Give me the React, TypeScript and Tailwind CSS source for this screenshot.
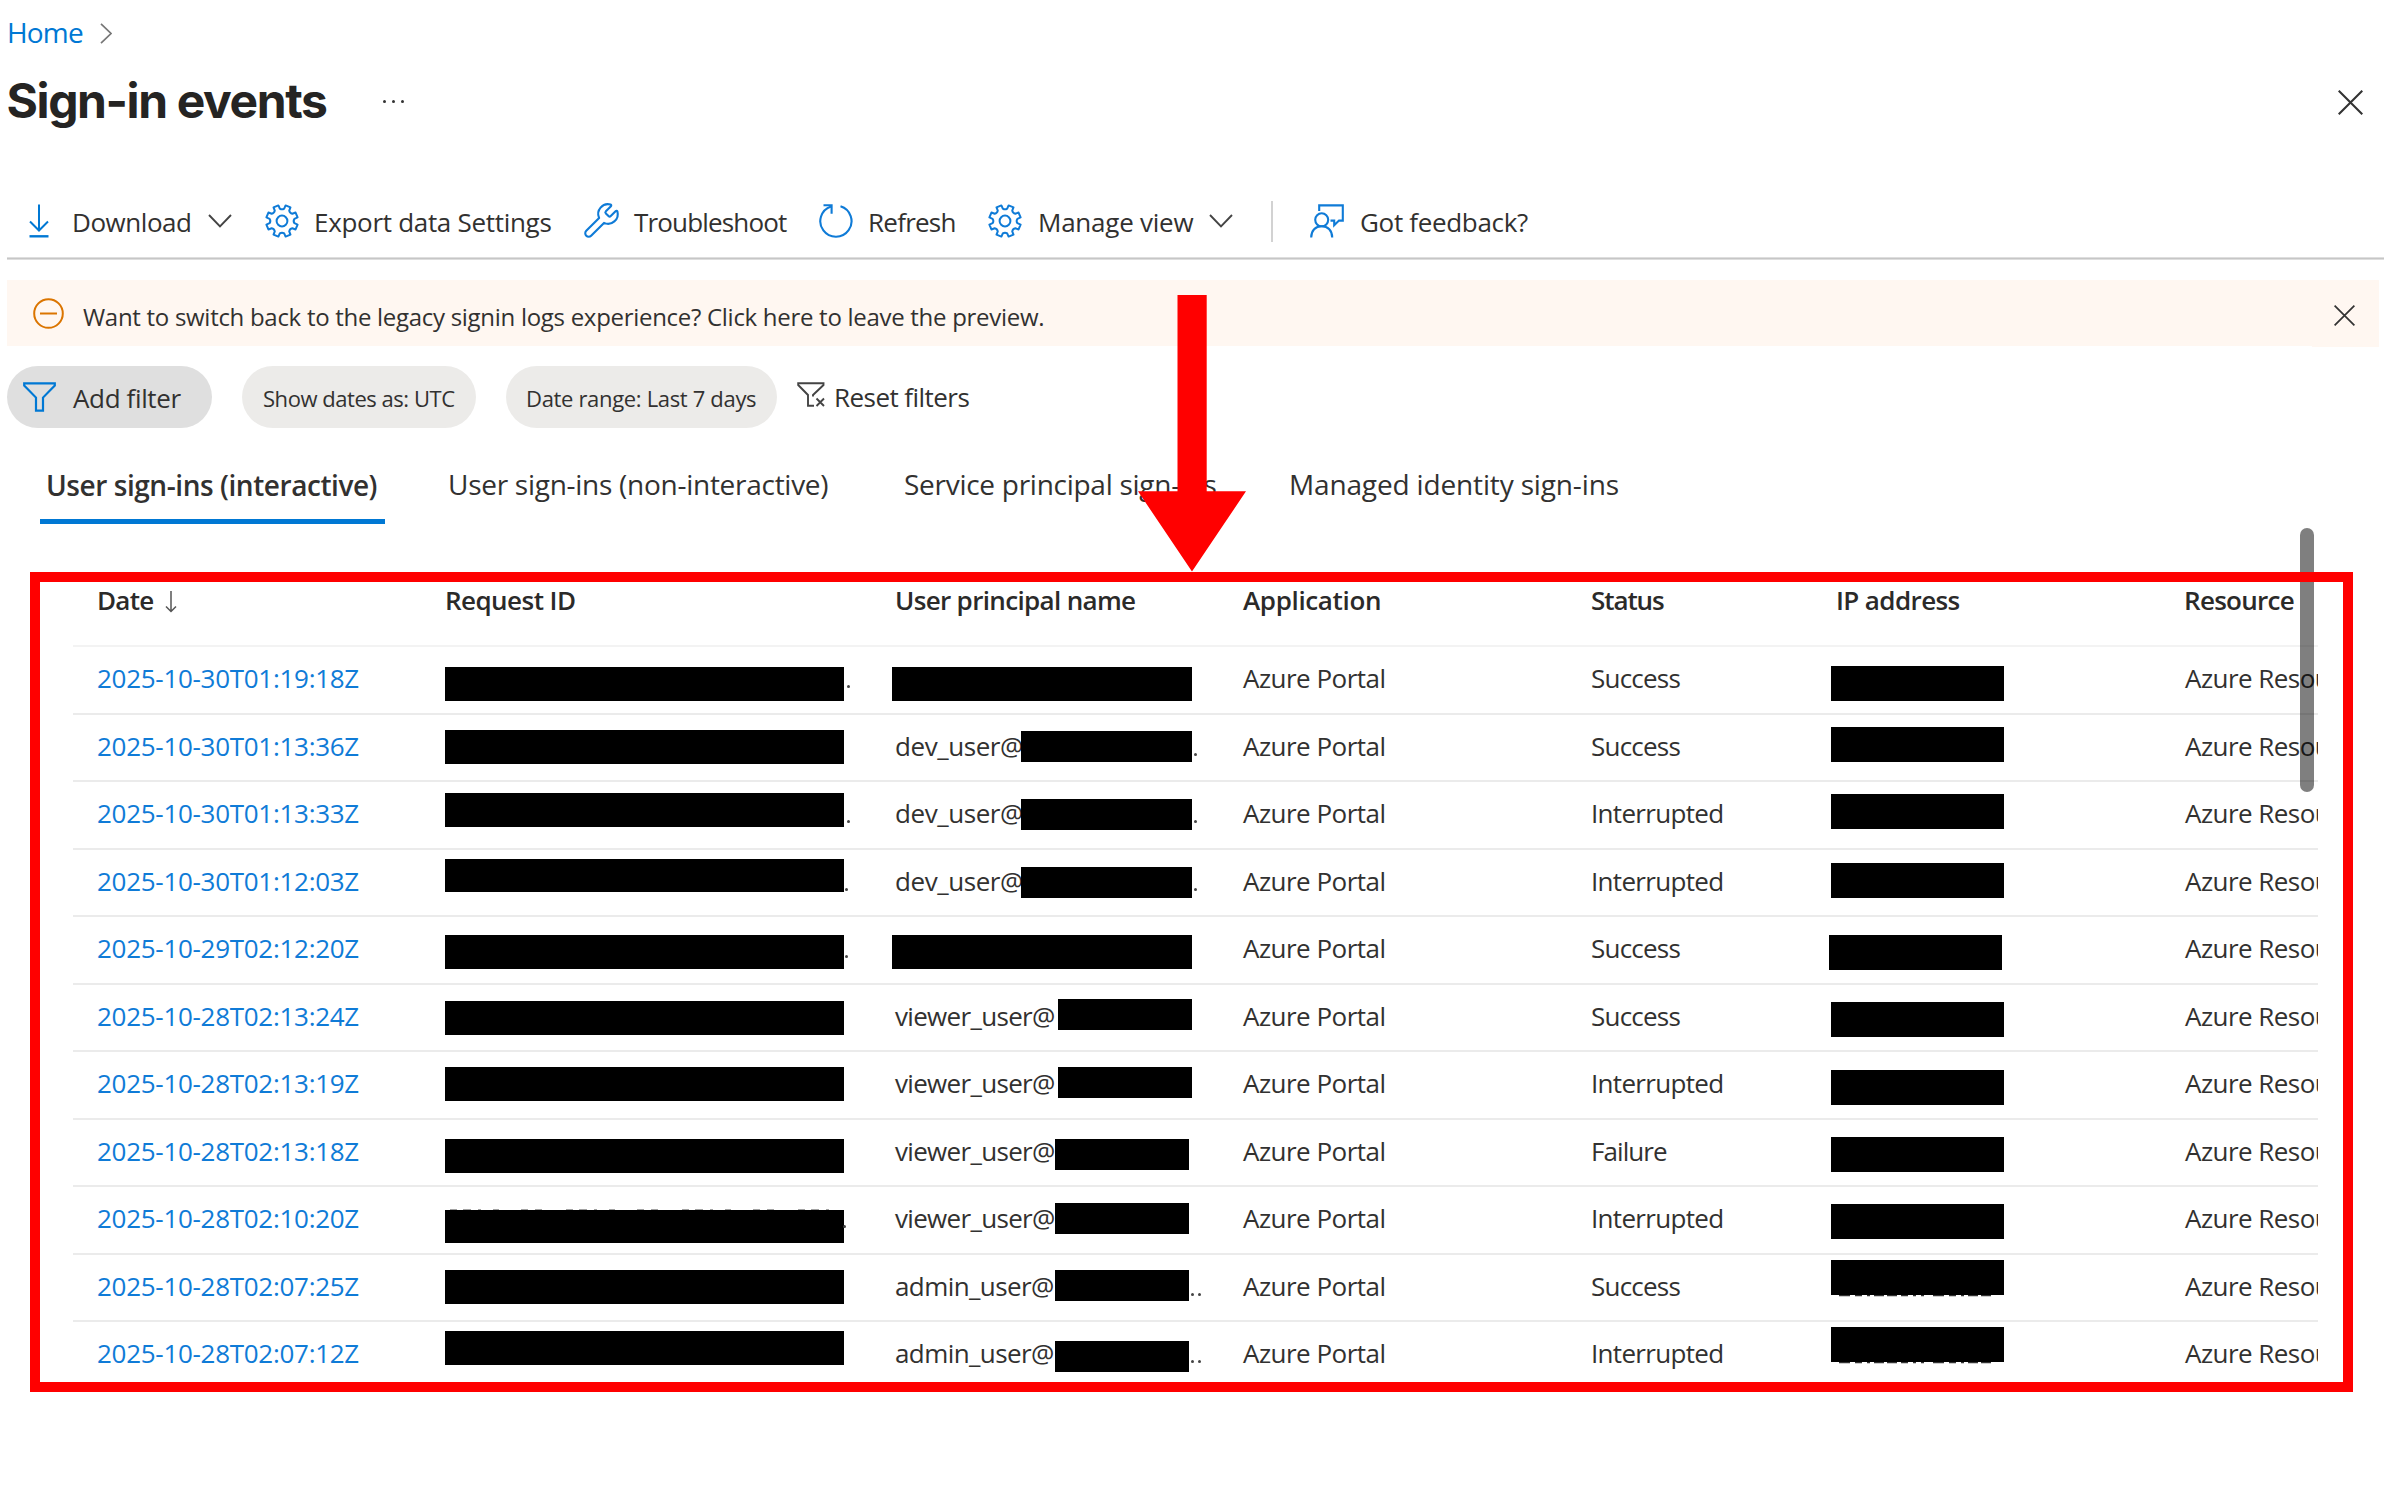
import type { ReactNode } from "react";
import { Wrench } from "lucide-react";

type Span = [left: number, right: number, top: number, bottom: number];

interface Row {
  date: string;
  user?: [text: string, tracking: string];
  status: string;
  request: [top: number, bottom: number];
  name: Span;
  ip: Span;
  requestDot?: number;
  nameDots?: number[];
}

const DEV: [string, string] = ["dev_user@", "tracking-[-0.43px]"];
const VIEWER: [string, string] = ["viewer_user@", "tracking-[-0.68px]"];
const ADMIN: [string, string] = ["admin_user@", "tracking-[-0.59px]"];

const STATUS_TRACKING: Record<string, string> = {
  Success: "tracking-[-0.78px]",
  Interrupted: "tracking-[-0.68px]",
  Failure: "tracking-[-0.93px]",
};

const ROWS: Row[] = [
  { date: "2025-10-30T01:19:18Z", status: "Success", request: [667, 701], name: [891.5, 1192, 667, 701], ip: [1831, 2004, 666, 701], requestDot: 847 },
  { date: "2025-10-30T01:13:36Z", user: DEV, status: "Success", request: [730, 764], name: [1021, 1192, 731.5, 762.5], ip: [1831, 2004, 727.5, 762.5], nameDots: [1194] },
  { date: "2025-10-30T01:13:33Z", user: DEV, status: "Interrupted", request: [793, 827], name: [1021, 1192, 799, 830], ip: [1831, 2004, 794, 829], requestDot: 847, nameDots: [1194] },
  { date: "2025-10-30T01:12:03Z", user: DEV, status: "Interrupted", request: [859, 892.5], name: [1021, 1192, 867, 898], ip: [1831, 2004, 863, 898], requestDot: 845, nameDots: [1194] },
  { date: "2025-10-29T02:12:20Z", status: "Success", request: [935, 969], name: [891.5, 1192, 935, 969], ip: [1829, 2002, 935, 970], requestDot: 845 },
  { date: "2025-10-28T02:13:24Z", user: VIEWER, status: "Success", request: [1001, 1035], name: [1058, 1192, 999, 1030], ip: [1831, 2004, 1002.5, 1037.5] },
  { date: "2025-10-28T02:13:19Z", user: VIEWER, status: "Interrupted", request: [1067.5, 1101], name: [1058, 1192, 1067.5, 1098.5], ip: [1831, 2004, 1070, 1105] },
  { date: "2025-10-28T02:13:18Z", user: VIEWER, status: "Failure", request: [1139, 1173], name: [1055, 1189, 1139, 1170], ip: [1831, 2004, 1137, 1172] },
  { date: "2025-10-28T02:10:20Z", user: VIEWER, status: "Interrupted", request: [1210, 1243], name: [1055, 1189, 1203.5, 1234.5], ip: [1831, 2004, 1204.5, 1239.5], requestDot: 843 },
  { date: "2025-10-28T02:07:25Z", user: ADMIN, status: "Success", request: [1270.5, 1304], name: [1055, 1189, 1270.5, 1301.5], ip: [1831, 2004, 1260.5, 1295], nameDots: [1191, 1198] },
  { date: "2025-10-28T02:07:12Z", user: ADMIN, status: "Interrupted", request: [1331, 1365], name: [1055, 1189, 1341, 1372], ip: [1831, 2004, 1327.5, 1362], nameDots: [1191, 1198] },
];

const TABLE_LEFT = 73;
const FIRST_ROW = 647;
const ROW_HEIGHT = 67.56;
const GRID = "grid grid-cols-[348px_450px_348px_348px_246px_348px_200px] pl-6";

const GEAR = (() => {
  const pt = (r: number, deg: number) => {
    const a = (deg * Math.PI) / 180;
    return `${(17 + r * Math.cos(a)).toFixed(2)} ${(17 + r * Math.sin(a)).toFixed(2)}`;
  };
  let d = "";
  for (let i = 0; i < 8; i++) {
    const c = 22.5 + i * 45;
    d += `${i ? "L" : "M"}${pt(12.6, c - 12.5)} L${pt(16, c - 9.5)} L${pt(16, c + 9.5)} L${pt(12.6, c + 12.5)} Q${pt(10.9, c + 22.5)} ${pt(12.6, c + 32.5)} `;
  }
  return d + "Z";
})();

function Gear() {
  return (
    <svg className="size-[34px] shrink-0" viewBox="0 0 34 34" fill="none" stroke="#0f7bd7" strokeWidth="2" strokeLinejoin="round">
      <path d={GEAR} />
      <circle cx="17" cy="17" r="5.4" />
    </svg>
  );
}

function Chevron() {
  return (
    <svg className="h-3.5 w-6 shrink-0" viewBox="0 0 24 14" fill="none" stroke="#444" strokeWidth="1.9">
      <path d="M1 1 12 12.3 23 1" />
    </svg>
  );
}

function Cross({ className }: { className: string }) {
  return (
    <svg className={className} viewBox="0 0 24 24" fill="none" stroke="#333" strokeWidth="2">
      <path d="M.7.7 23.3 23.3M23.3.7.7 23.3" />
    </svg>
  );
}

function Label({ className, children }: { className: string; children: ReactNode }) {
  return <span className={`whitespace-nowrap ${className}`}>{children}</span>;
}

function Toolbar() {
  return (
    <div className="mt-[46px] flex h-[72px] items-center text-[26px]">
      <svg className="ml-[28.5px] h-[34px] w-5" viewBox="0 0 20 34" fill="none" stroke="#0078d4" strokeWidth="2">
        <path d="M10 .5V26.5M1 17.5 10 26.5 19 17.5" />
        <path d="M.5 32.3H19.5" strokeWidth="2.4" />
      </svg>
      <Label className="ml-[23.5px] w-[136px] pt-0.5 tracking-[-0.45px]">Download</Label>
      <Chevron />
      <div className="ml-[33px] flex">
        <Gear />
      </div>
      <Label className="ml-[15px] w-[268px] pt-0.5 tracking-[-0.3px]">Export data Settings</Label>
      <Wrench className="-mt-px size-[39px] shrink-0 text-[#0f7bd7]" strokeWidth={1.3} />
      <Label className="ml-[13px] w-[185px] pt-0.5 tracking-[-0.84px]">Troubleshoot</Label>
      <svg className="h-[34px] w-[34px] shrink-0" viewBox="0 0 34 34" fill="none" stroke="#0f7bd7" strokeWidth="2.1">
        <path d="M21.5 2.3A15.6 15.6 0 1 1 12 2.4" />
        <path d="M4.5 1.2H12.6V9.8" />
      </svg>
      <Label className="ml-[15px] w-[120px] pt-0.5 tracking-[-0.75px]">Refresh</Label>
      <Gear />
      <Label className="ml-[16px] w-[171px] pt-0.5 tracking-[-0.24px]">Manage view</Label>
      <Chevron />
      <div className="ml-[38px] h-[41px] w-0.5 bg-[#d2d2d2]" />
      <svg className="ml-[37px] h-[34px] w-[34px] shrink-0" viewBox="0 0 34 34" fill="none" stroke="#0f7bd7" strokeWidth="2.1">
        <circle cx="11.7" cy="15.8" r="6.5" />
        <path d="M1.2 33.5C1.2 26.5 5.5 22.3 11.7 22.3S22.2 26.5 22.2 33.5" />
        <path d="M9.2 7V1.4H32.8V16.6H29L24.2 21.2V16.6H20.5" />
      </svg>
      <Label className="ml-[16px] pt-0.5 tracking-[-0.32px]">Got feedback?</Label>
    </div>
  );
}

function Banner() {
  return (
    <div className="relative ml-[7px] mt-5 flex h-[66px] w-[2372px] items-center bg-[#fff7f1]">
      <svg className="ml-[26px] size-[31px]" viewBox="0 0 31 31" fill="none" stroke="#db7500" strokeWidth="2">
        <circle cx="15.5" cy="15.5" r="14.3" />
        <path d="M7 15.5H24" />
      </svg>
      <Label className="ml-[19px] pt-2 text-2xl tracking-[-0.29px]">
        Want to switch back to the legacy signin logs experience? Click here to leave the preview.
      </Label>
      <Cross className="ml-auto mr-6 mt-1 size-[21px]" />
      <div className="absolute right-0 top-full h-px w-[67px] bg-[#fff7f1]" />
    </div>
  );
}

function Filters() {
  return (
    <div className="ml-[7px] mt-5 flex h-[62px] items-center text-[26px]">
      <div className="flex h-[62px] w-[205px] items-center rounded-[31px] bg-[#dfdfdf]">
        <svg className="ml-4 h-[30px] w-[33px]" viewBox="0 0 33 30" fill="none" stroke="#0078d4" strokeWidth="2.2">
          <path d="M1.2 1.3H31.8V3.6L20 15.6V28.7H13V15.6L1.2 3.6Z" />
        </svg>
        <Label className="ml-[17px] pt-0.5 tracking-[-0.36px]">Add filter</Label>
      </div>
      <div className="ml-[30px] flex h-[62px] w-[234px] items-center rounded-[31px] bg-[#ecebe9] pl-[21px] text-[22px]">
        <Label className="pt-0.5 tracking-[-0.46px]">Show dates as: UTC</Label>
      </div>
      <div className="ml-[30px] flex h-[62px] w-[271px] items-center rounded-[31px] bg-[#ecebe9] pl-5 text-[22px]">
        <Label className="pt-0.5 tracking-[-0.33px]">Date range: Last 7 days</Label>
      </div>
      <svg className="-mt-1.5 ml-5 h-[25px] w-7" viewBox="0 0 28 25" fill="none" stroke="#444" strokeWidth="1.9">
        <path d="M16 14.5V13L26.5 3V1.2H1.2V3L11 13V23.8H17" />
        <path d="M19.5 16.5 27 24M27 16.5 19.5 24" />
      </svg>
      <Label className="ml-[9px] tracking-[-0.55px]">Reset filters</Label>
    </div>
  );
}

function Tabs() {
  return (
    <div className="ml-10 mt-5 flex h-[76px] text-[28px] leading-[73px]">
      <div className="w-[345px] border-b-[5px] border-[#0078d4] pl-[6px] pt-px">
        <Label className="block h-[70px] font-semibold tracking-[-0.44px]">User sign-ins (interactive)</Label>
      </div>
      <Label className="ml-[63px] w-[456px] tracking-[-0.27px]">User sign-ins (non-interactive)</Label>
      <Label className="w-[385px] tracking-[-0.27px]">Service principal sign-ins</Label>
      <Label className="tracking-[-0.15px]">Managed identity sign-ins</Label>
    </div>
  );
}

function Redaction({ span: [left, right, top, bottom], rowTop }: { span: Span; rowTop: number }) {
  return (
    <div
      className="absolute bg-black"
      style={{ left: left - TABLE_LEFT, top: top - rowTop, width: right - left, height: bottom - top }}
    />
  );
}

function Dot({ x }: { x: number }) {
  return <div className="absolute top-[38px] size-[3px] rounded-full bg-[#444]" style={{ left: x - TABLE_LEFT }} />;
}

function EventRow({ row, index }: { row: Row; index: number }) {
  const rowTop = FIRST_ROW + index * ROW_HEIGHT;
  const last = index === ROWS.length - 1;
  return (
    <div className={`relative h-[67.56px] leading-[63px] ${GRID} ${last ? "" : "border-b-2 border-[#ebebeb]"}`}>
      <Label className="tracking-[-0.29px] text-[#0f7bd7]">{row.date}</Label>
      <span />
      <Label className={row.user ? row.user[1] : ""}>{row.user?.[0]}</Label>
      <Label className="tracking-[-0.52px]">Azure Portal</Label>
      <Label className={STATUS_TRACKING[row.status]}>{row.status}</Label>
      <span />
      <Label className="tracking-[-0.55px]">Azure Resource Manager</Label>
      {index === 8 && (
        <svg className="absolute left-[374px] top-[21.5px] h-[2px] w-[390px]" viewBox="0 0 390 2">
          <path d="M3 1.2H384" stroke="#444" strokeWidth="1.6" strokeDasharray="7 6 8 7 3 12 6 22 7 7 7 24" />
        </svg>
      )}
      <Redaction span={[445, 843.5, row.request[0], row.request[1]]} rowTop={rowTop} />
      <Redaction span={row.name} rowTop={rowTop} />
      <Redaction span={row.ip} rowTop={rowTop} />
      {row.requestDot && <Dot x={row.requestDot} />}
      {row.nameDots?.map((x) => <Dot key={x} x={x} />)}
      {index >= 9 && (
        <svg
          className="absolute left-[1764px] h-[2px] w-[160px]"
          style={{ top: row.ip[3] - rowTop }}
          viewBox="0 0 160 2"
        >
          <path d="M2 .6H157" stroke="#333" strokeWidth="1.2" strokeDasharray="11 5 7 5 3 4 10 3 10 4 7 5 3 5 3 9" />
        </svg>
      )}
    </div>
  );
}

function EventsTable() {
  return (
    <div className="ml-[73px] mt-12 w-[2245px] overflow-hidden text-[26px]">
      <div className={`h-[75px] border-b-2 border-[#f3f3f3] font-semibold leading-[56px] text-[#2b2a29] ${GRID}`}>
        <div className="flex items-center self-start">
          <Label className="w-[68px] tracking-[-0.75px]">Date</Label>
          <svg className="mt-1 h-[22px] w-3" viewBox="0 0 12 22" fill="none" stroke="#555" strokeWidth="1.5">
            <path d="M6 0V20.5M1 15.5 6 20.5 11 15.5" />
          </svg>
        </div>
        <Label className="tracking-[-0.55px]">Request ID</Label>
        <Label className="tracking-[-0.66px]">User principal name</Label>
        <Label className="tracking-[-0.35px]">Application</Label>
        <Label className="tracking-[-1.09px]">Status</Label>
        <Label className="-ml-px tracking-[-0.6px]">IP address</Label>
        <Label className="-ml-px tracking-[-0.72px]">Resource</Label>
      </div>
      {ROWS.map((row, i) => (
        <EventRow key={row.date} row={row} index={i} />
      ))}
    </div>
  );
}

export default function App() {
  return (
    <div className="relative h-[1490px] w-[2384px] overflow-hidden bg-white font-['Open_Sans',sans-serif] text-[#323130]">
      <div className="flex h-[62px] items-center">
        <Label className="ml-[7px] pt-px text-[28px] tracking-[-0.84px] text-[#0078d4]">Home</Label>
        <svg className="ml-[17px] mt-1 h-[21px] w-3" viewBox="0 0 12 21" fill="none" stroke="#777" strokeWidth="1.7">
          <path d="M1 .8 11 10.5 1 20.2" />
        </svg>
      </div>
      <div className="flex h-[77px] items-center">
        <h1 className="ml-[6.5px] whitespace-nowrap font-['Inter',sans-serif] text-[48px] font-bold leading-[77px] tracking-[-1.4px] text-[#252423]">
          Sign-in events
        </h1>
        <div className="ml-[56px] mt-0.5 flex gap-[6px]">
          <i className="size-[3px] rounded-full bg-[#333]" />
          <i className="size-[3px] rounded-full bg-[#333]" />
          <i className="size-[3px] rounded-full bg-[#333]" />
        </div>
        <Cross className="ml-auto mr-[21px] mt-[3px] size-[25px]" />
      </div>
      <Toolbar />
      <div className="ml-[7px] h-[3px] border-y border-[#dedede] bg-[#c6c6c6]" />
      <Banner />
      <Filters />
      <Tabs />
      <EventsTable />

      <div className="absolute left-[2299.5px] top-[528px] h-[264px] w-[14px] rounded-full bg-black/50" />
      <div className="absolute left-[30px] top-[572px] h-[820px] w-[2323px] border-[10px] border-[#ff0000]" />
      <svg className="absolute left-[1138px] top-[295px] h-[277px] w-[108px]" viewBox="0 0 108 277" fill="#ff0000">
        <path d="M39.5 0H68.7V196.3H108L54 276.5 0 196.3H39.5Z" />
      </svg>
    </div>
  );
}
